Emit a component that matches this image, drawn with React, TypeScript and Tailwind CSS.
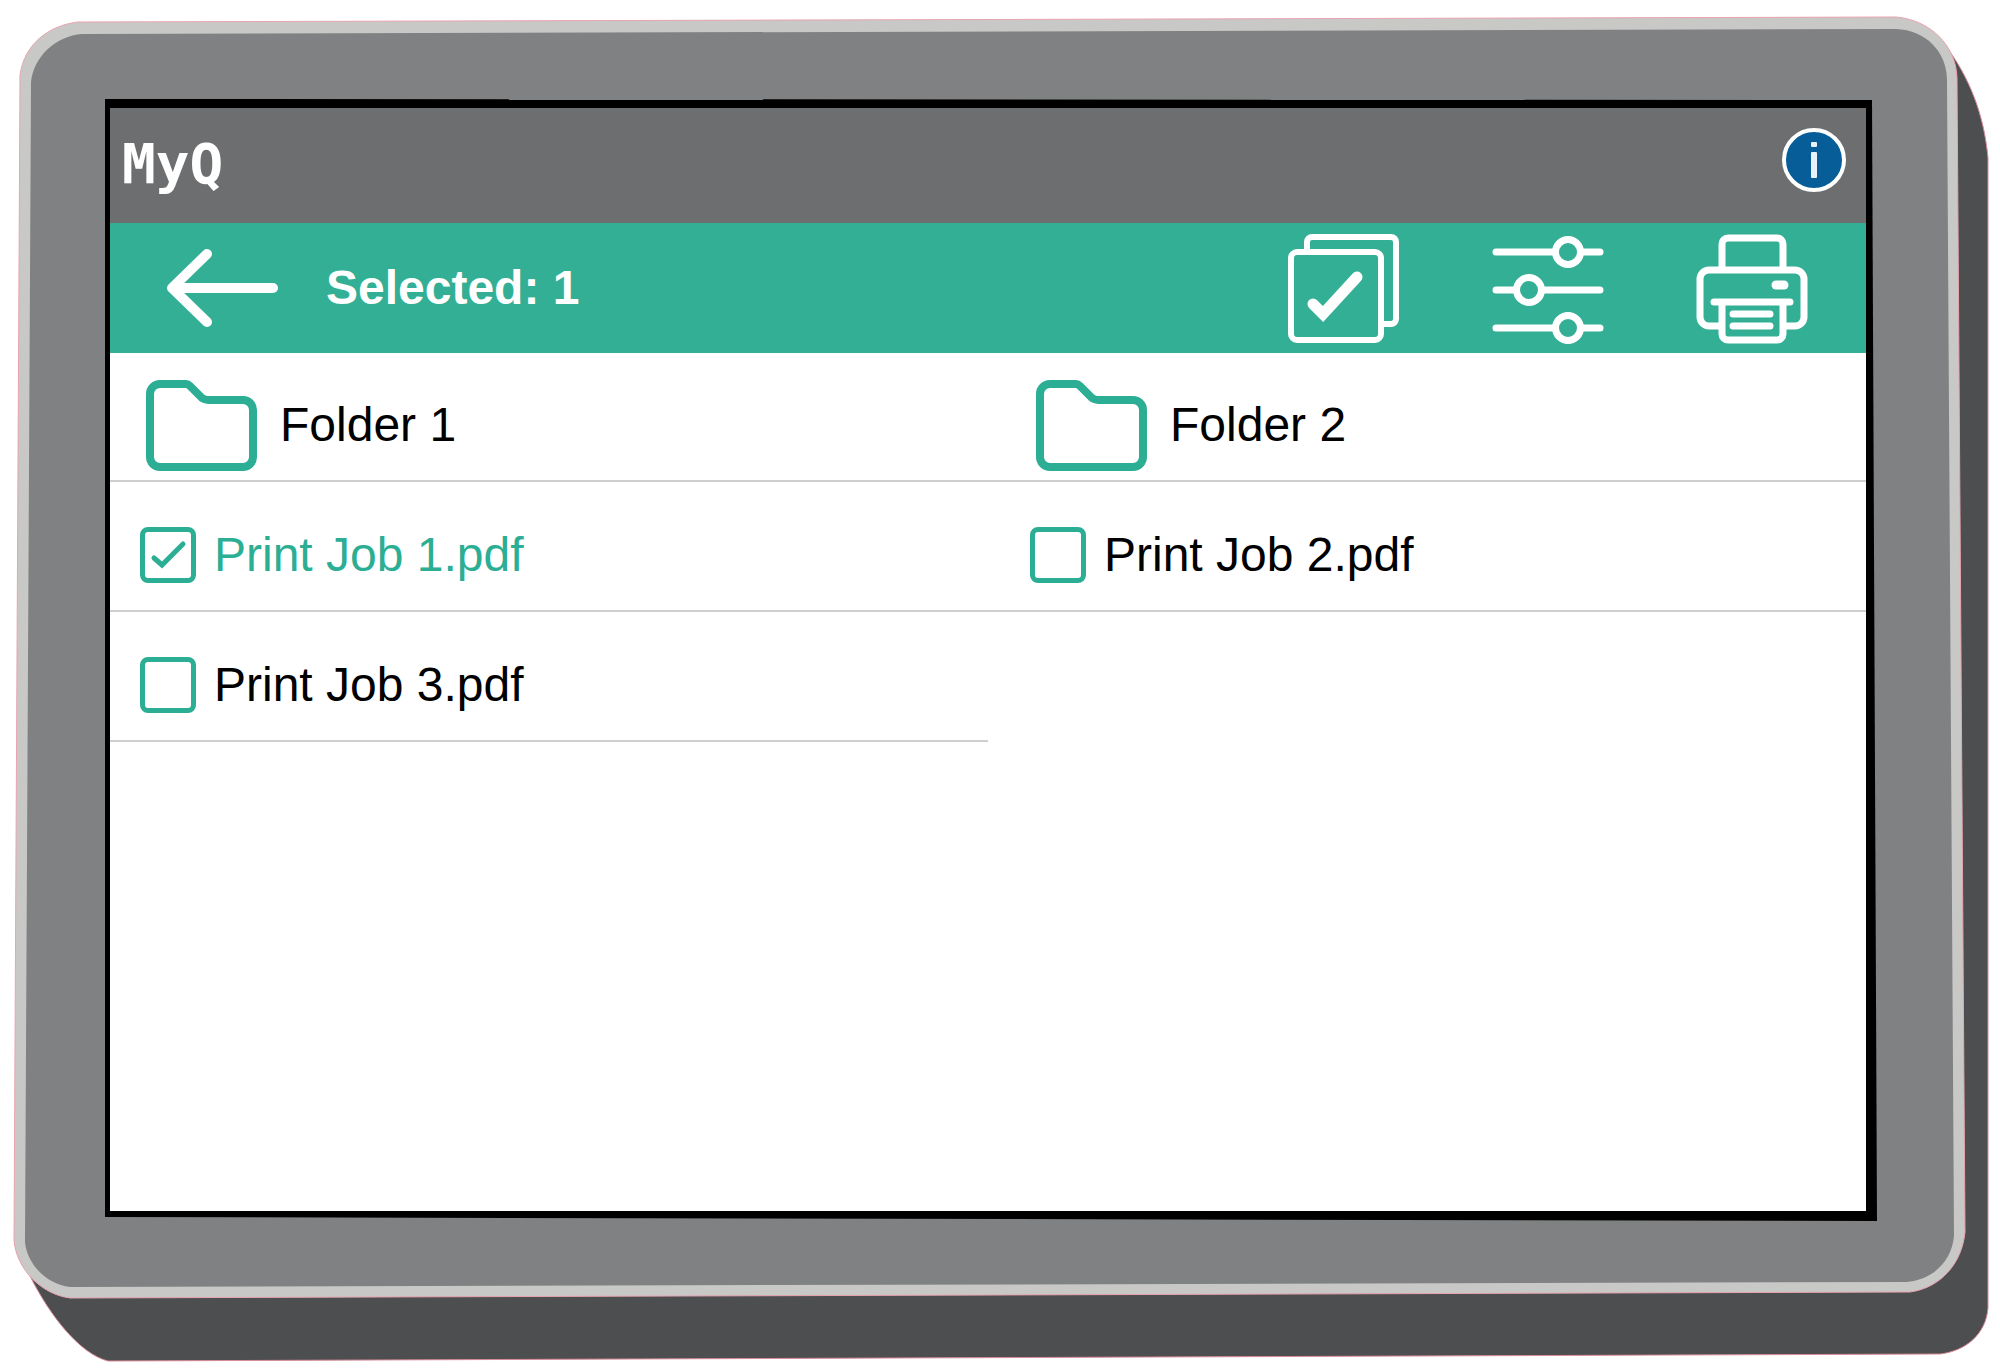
import clsx from "clsx";
import { useState } from "react";

interface Item {
    id: string;
    name: string;
}

const FOLDERS: Item[] = [
    { id: "folder-1", name: "Folder 1" },
    { id: "folder-2", name: "Folder 2" },
];

const PRINT_JOBS: Item[] = [
    { id: "job-1", name: "Print Job 1.pdf" },
    { id: "job-2", name: "Print Job 2.pdf" },
    { id: "job-3", name: "Print Job 3.pdf" },
];

// Printer panel casing, drawn behind the screen
const DeviceCasing = () => (
    <svg
        className="absolute inset-0 -z-10 h-full w-full"
        viewBox="0 0 2000 1369"
        preserveAspectRatio="none"
        aria-hidden="true"
    >
        <path
            d="M1945 45C1970 78 1984 115 1988 158V1308C1986 1334 1966 1351 1940 1354L108 1361C80 1354 50 1316 30 1276Z"
            fill="#4c4e4f"
            stroke="#d98a98"
            strokeWidth="1"
        />
        <path
            d="M20 75C24 46 46 26 78 22L1896 17C1930 20 1956 45 1957 78L1965 1232C1962 1264 1940 1288 1910 1292L70 1298C40 1294 16 1268 14 1240Z"
            fill="#c8c9c7"
            stroke="#e9a3b0"
            strokeWidth="1"
        />
        <path
            d="M31 82C34 56 56 36 82 34L1896 29C1926 30 1947 52 1947 80L1954 1236C1952 1260 1934 1280 1906 1282L70 1287C46 1284 27 1264 25 1242Z"
            fill="#808182"
        />
        <path d="M105 99L1872 100L1877 1221L105 1217Z" fill="#000" />
    </svg>
);

const InfoIcon = () => (
    <svg className="h-16 w-16" viewBox="0 0 64 64" aria-hidden="true">
        <circle cx="32" cy="32" r="30" fill="#065d97" stroke="#fff" strokeWidth="4" />
        <rect x="29" y="14" width="6" height="5" rx="1" fill="#e8f2f8" />
        <rect x="29" y="24" width="6" height="26" rx="1" fill="#e8f2f8" />
    </svg>
);

const BackIcon = () => (
    <svg
        className="h-20 w-28"
        viewBox="0 0 112 80"
        fill="none"
        stroke="currentColor"
        strokeWidth="10"
        strokeLinecap="round"
        strokeLinejoin="round"
        aria-hidden="true"
    >
        <path d="M41 6L6 40L41 74M8 40H107" />
    </svg>
);

const SelectAllIcon = () => (
    <svg
        className="h-28 w-28"
        viewBox="0 0 112 112"
        fill="none"
        stroke="currentColor"
        strokeWidth="6"
        strokeLinejoin="round"
        aria-hidden="true"
    >
        <path d="M19 20V10a5 5 0 0 1 5-5H103a5 5 0 0 1 5 5V87a5 5 0 0 1-5 5H93" />
        <rect x="3" y="20" width="90" height="88" rx="6" />
        <path d="M25 72L35 82L69 45" strokeWidth="11" strokeLinecap="round" strokeLinejoin="miter" />
    </svg>
);

const SettingsIcon = () => (
    <svg
        className="h-28 w-28"
        viewBox="0 0 112 112"
        fill="none"
        stroke="currentColor"
        strokeWidth="7"
        strokeLinecap="round"
        aria-hidden="true"
    >
        <path d="M4 20H61M91 20H108M4 58H22M52 58H108M4 96H61M91 96H108" />
        <circle cx="76" cy="20" r="12.5" />
        <circle cx="37" cy="58" r="12.5" />
        <circle cx="76" cy="96" r="12.5" />
    </svg>
);

const PrintIcon = () => (
    <svg
        className="h-28 w-28"
        viewBox="0 0 112 112"
        fill="none"
        stroke="currentColor"
        strokeWidth="7"
        aria-hidden="true"
    >
        <path d="M26 38V12a6 6 0 0 1 6-6H81a6 6 0 0 1 6 6V38" />
        <path d="M26 94H13a9 9 0 0 1-9-9V47a9 9 0 0 1 9-9H99a9 9 0 0 1 9 9V85a9 9 0 0 1-9 9H87" />
        <path d="M26 70V102a6 6 0 0 0 6 6H81a6 6 0 0 0 6-6V70" />
        <path d="M18 70H94M37 82H74M37 94H74" strokeLinecap="round" />
        <path d="M80 53H88" strokeWidth="9" strokeLinecap="round" />
    </svg>
);

const FolderIcon = () => (
    <svg
        className="h-[92px] w-28"
        viewBox="0 0 112 92"
        fill="none"
        stroke="#2bae93"
        strokeWidth="8"
        strokeLinejoin="round"
        aria-hidden="true"
    >
        <path d="M4 15a10 10 0 0 1 10-10H40q2 0 4 2L56 19q3 2 6 2H97a10 10 0 0 1 10 10V78a10 10 0 0 1-10 10H14a10 10 0 0 1-10-10Z" />
    </svg>
);

const ROW_STYLE =
    "flex h-[130px] w-full items-center border-b-2 border-[#cfcfcf] pt-[18px]";

const App = () => {
    const [selected, setSelected] = useState<string[]>(["job-1"]);

    const toggleJob = (id: string) => {
        setSelected((prev) =>
            prev.includes(id) ? prev.filter((item) => item !== id) : [...prev, id]
        );
    };

    const selectAll = () => {
        setSelected(PRINT_JOBS.map((job) => job.id));
    };

    return (
        <div className="relative isolate flex min-h-screen flex-col bg-white pt-[108px] pr-[134px] pb-[158px] pl-[110px] font-['Liberation_Sans',Arial,sans-serif] text-5xl text-black">
            <DeviceCasing />

            <div className="flex flex-1 flex-col bg-white">
                <header className="flex h-[115px] items-center justify-between bg-[#6d6e70] pr-5 pb-3 pl-3 text-white">
                    <h1 className="pt-2 font-['DejaVu_Sans_Mono',monospace] text-[56px] leading-none font-bold">
                        MyQ
                    </h1>
                    <button type="button" aria-label="Info">
                        <InfoIcon />
                    </button>
                </header>

                <nav className="flex h-[130px] items-center bg-[#33af95] pr-[58px] pl-14 text-white">
                    <button type="button" aria-label="Back">
                        <BackIcon />
                    </button>
                    <p className="ml-12 font-bold">Selected: {selected.length}</p>
                    <div className="ml-auto flex gap-[92px]">
                        <button type="button" aria-label="Select all" onClick={selectAll}>
                            <SelectAllIcon />
                        </button>
                        <button type="button" aria-label="Settings">
                            <SettingsIcon />
                        </button>
                        <button type="button" aria-label="Print">
                            <PrintIcon />
                        </button>
                    </div>
                </nav>

                <ul className="-mt-px grid grid-cols-2">
                    {FOLDERS.map((folder, index) => (
                        <li key={folder.id}>
                            <button
                                type="button"
                                className={clsx(
                                    ROW_STYLE,
                                    "gap-[22px]",
                                    index % 2 ? "pl-12" : "pl-9"
                                )}
                            >
                                <FolderIcon />
                                {folder.name}
                            </button>
                        </li>
                    ))}
                    {PRINT_JOBS.map((job, index) => {
                        const checked = selected.includes(job.id);
                        return (
                            <li key={job.id}>
                                <label
                                    className={clsx(
                                        ROW_STYLE,
                                        "gap-[18px]",
                                        index % 2 ? "pl-[42px]" : "pl-[30px]",
                                        checked && "text-[#2bae93]"
                                    )}
                                >
                                    <span className="relative h-14 w-14">
                                        <input
                                            type="checkbox"
                                            className="block h-14 w-14 appearance-none rounded-lg border-[5px] border-[#2bae93]"
                                            checked={checked}
                                            onChange={() => toggleJob(job.id)}
                                        />
                                        {checked && (
                                            <svg
                                                className="pointer-events-none absolute inset-0"
                                                viewBox="0 0 56 56"
                                                fill="none"
                                                stroke="#2bae93"
                                                strokeWidth="5"
                                                strokeLinecap="round"
                                                aria-hidden="true"
                                            >
                                                <path d="M14 31L22 38L43 17" />
                                            </svg>
                                        )}
                                    </span>
                                    {job.name}
                                </label>
                            </li>
                        );
                    })}
                </ul>
            </div>
        </div>
    );
};

export default App;
